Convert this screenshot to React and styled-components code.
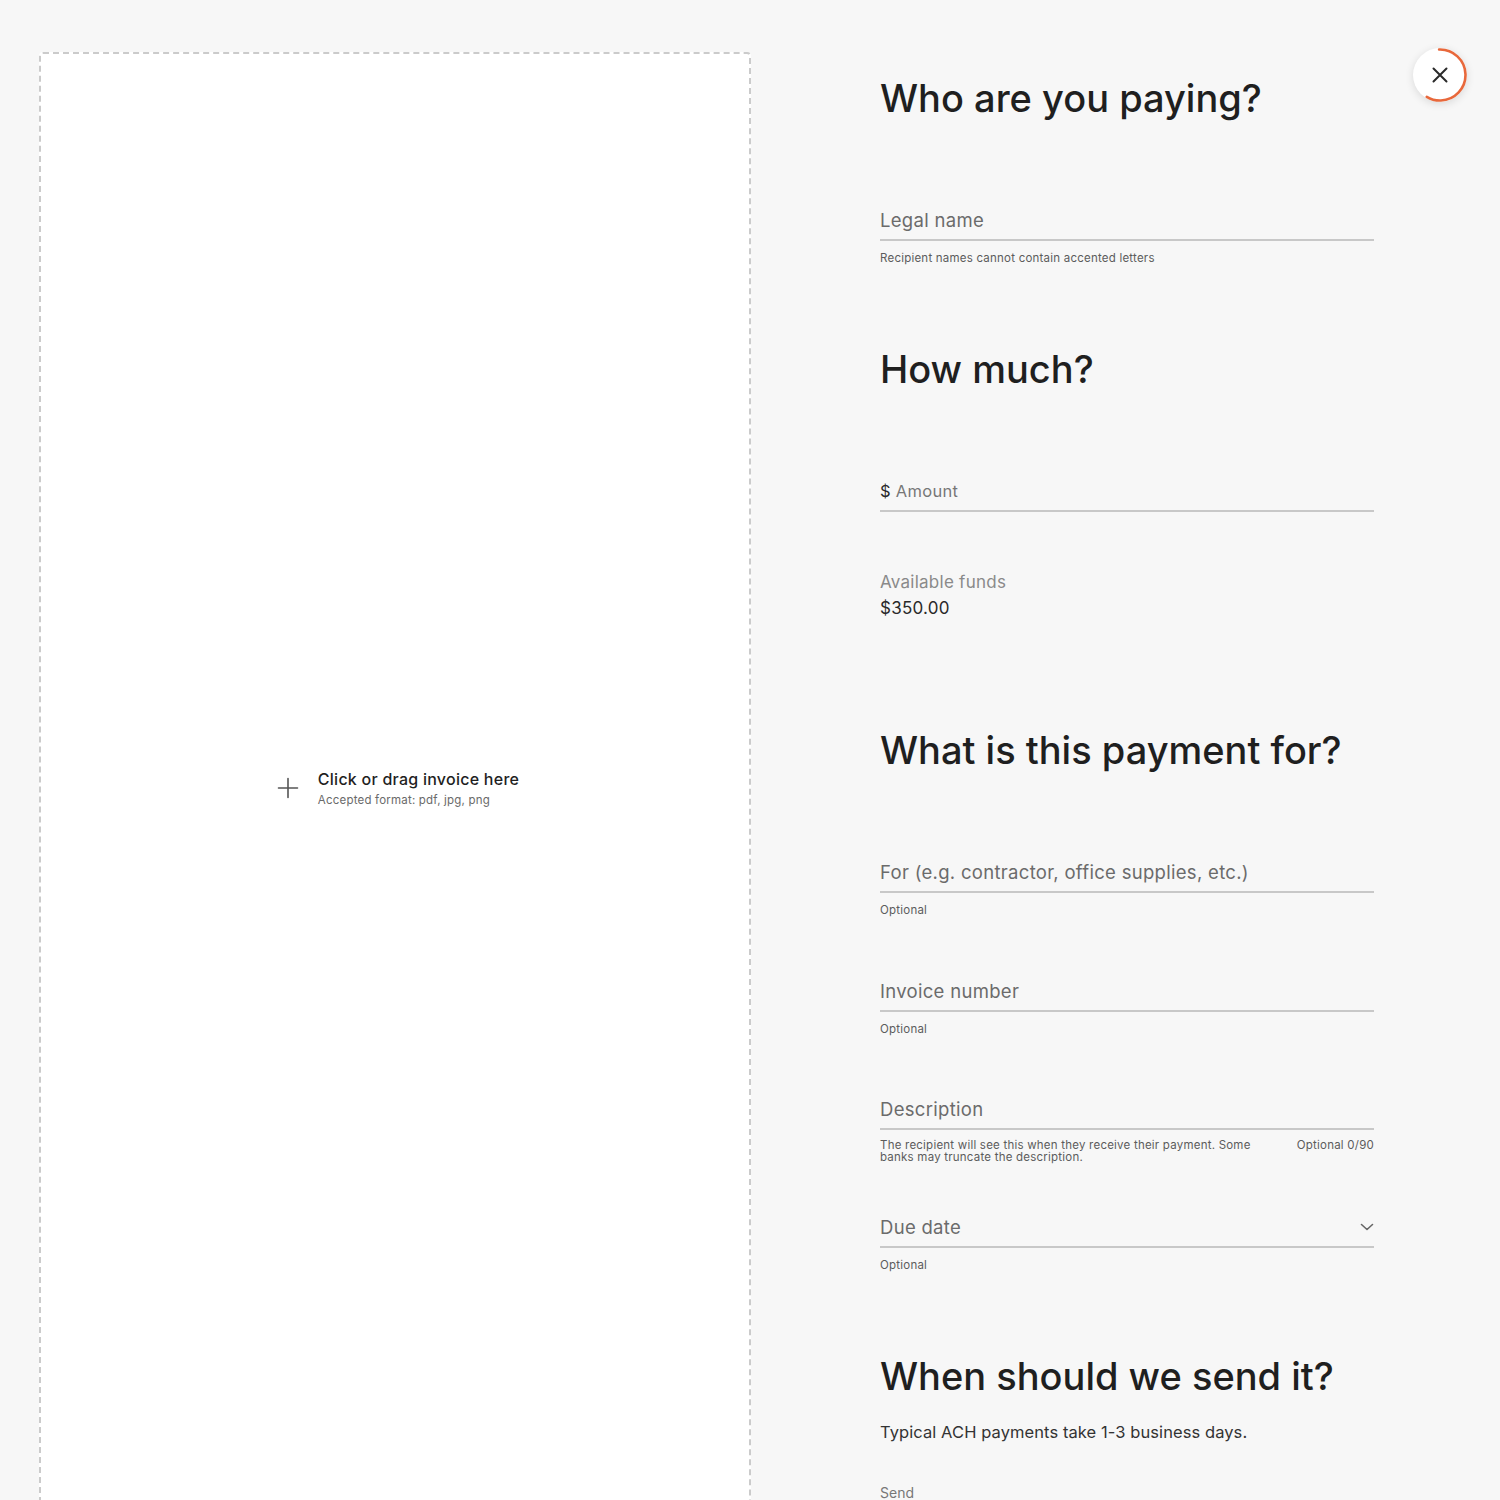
import React from "react";
import styled, { createGlobalStyle } from "styled-components";

const Global = createGlobalStyle`
  html, body { margin: 0; padding: 0; background: #f7f7f7; }
  body { font-family: Inter, "Noto Sans", "Liberation Sans", sans-serif; color: #1f1f1f; }
  * { box-sizing: border-box; }
`;

const Page = styled.div`
  position: relative;
  display: grid;
  grid-template-columns: 712px 494px;
  column-gap: 129px;
  padding: 52px 0 0 39px;
  min-height: 1500px;
`;

const DropZone = styled.div`
  height: 1472px;
  background: #ffffff;
  border: 2px dashed #cbcbcb;
  border-radius: 4px;
  display: flex;
  align-items: center;
  justify-content: center;
  padding-left: 6px;
`;

const DropInner = styled.div`
  display: flex;
  align-items: center;
  gap: 19px;
`;

const DropText = styled.div`
  display: flex;
  flex-direction: column;
  gap: 4px;
`;

const DropTitle = styled.div`
  font-size: 16px;
  line-height: 20px;
  font-weight: 500;
  letter-spacing: 0.25px;
  color: #1f1f1f;
`;

const DropSub = styled.div`
  font-size: 11.5px;
  line-height: 14px;
  letter-spacing: 0.2px;
  color: #6a6a6a;
`;

const Form = styled.div`
  display: flex;
  flex-direction: column;
  padding-top: 22px;
`;

const Heading = styled.h2`
  margin: ${p => p.$mt || 0}px 0 0;
  font-size: 38px;
  line-height: 48px;
  font-weight: 500;
  letter-spacing: 0px;
  color: #1f1f1f;
`;

const Field = styled.div`
  margin-top: ${p => p.$mt || 0}px;
  display: flex;
  align-items: center;
  justify-content: space-between;
  padding-bottom: 7px;
  border-bottom: 2px solid #c8c8c8;
`;

const Label = styled.div`
  font-size: ${p => p.$size || 18.5}px;
  line-height: 24px;
  letter-spacing: 0.3px;
  color: #6b6b6b;
`;

const Dollar = styled.span`
  color: #2a2a2a;
`;

const AmountText = styled.span`
  color: #777;
`;

const Helper = styled.div`
  margin-top: 9px;
  display: flex;
  justify-content: space-between;
  gap: 40px;
  font-size: 11.5px;
  letter-spacing: 0.22px;
  line-height: ${p => p.$lh || 16}px;
  color: #5c5c5c;
`;

const HelperRight = styled.span`
  white-space: nowrap;
  line-height: 12px;
`;

const FundsLabel = styled.div`
  margin-top: 57px;
  font-size: 17px;
  line-height: 26px;
  letter-spacing: 0.25px;
  color: #8a8a8a;
`;

const FundsValue = styled.div`
  font-size: 17px;
  line-height: 26px;
  letter-spacing: 0.25px;
  color: #2a2a2a;
`;

const Body = styled.div`
  margin-top: 20px;
  font-size: 16.5px;
  line-height: 24px;
  letter-spacing: 0.08px;
  color: #333;
`;

const Small = styled.div`
  margin-top: 41px;
  font-size: 14px;
  line-height: 16px;
  color: #777;
`;

const CloseButton = styled.button`
  position: absolute;
  top: 48px;
  left: 1413px;
  width: 54px;
  height: 54px;
  border-radius: 50%;
  border: none;
  padding: 0;
  background: #ffffff;
  box-shadow: 0 2px 8px rgba(0, 0, 0, 0.12);
  display: flex;
  align-items: center;
  justify-content: center;
  cursor: pointer;
`;

const Ring = styled.svg`
  position: absolute;
  inset: 0;
`;

const PlusIcon = () => (
  <svg width="22" height="22" viewBox="0 0 22 22" fill="none">
    <path d="M11 1.5v19M1.5 11h19" stroke="#555" strokeWidth="1.6" strokeLinecap="round" />
  </svg>
);

const Chevron = () => (
  <svg width="14" height="10" viewBox="0 0 14 10" fill="none">
    <path d="M1.5 2.5L7 7.5l5.5-5" stroke="#666" strokeWidth="1.6" strokeLinecap="round" strokeLinejoin="round" />
  </svg>
);

export default function App() {
  const r = 25.5;
  const c = 2 * Math.PI * r;
  const arc = c * (212 / 360);
  return (
    <>
      <Global />
      <Page>
        <DropZone>
          <DropInner>
            <PlusIcon />
            <DropText>
              <DropTitle>Click or drag invoice here</DropTitle>
              <DropSub>Accepted format: pdf, jpg, png</DropSub>
            </DropText>
          </DropInner>
        </DropZone>

        <Form>
          <Heading>Who are you paying?</Heading>
          <Field $mt={86}>
            <Label>Legal name</Label>
          </Field>
          <Helper>Recipient names cannot contain accented letters</Helper>

          <Heading $mt={79}>How much?</Heading>
          <Field $mt={86}>
            <Label $size={16.5}>
              <Dollar>$</Dollar> <AmountText>Amount</AmountText>
            </Label>
          </Field>
          <FundsLabel>Available funds</FundsLabel>
          <FundsValue>$350.00</FundsValue>

          <Heading $mt={105}>What is this payment for?</Heading>
          <Field $mt={86}>
            <Label>For (e.g. contractor, office supplies, etc.)</Label>
          </Field>
          <Helper>Optional</Helper>

          <Field $mt={61}>
            <Label>Invoice number</Label>
          </Field>
          <Helper>Optional</Helper>

          <Field $mt={60}>
            <Label>Description</Label>
          </Field>
          <Helper $lh={12}>
            <span>
              The recipient will see this when they receive their payment. Some
              <br />
              banks may truncate the description.
            </span>
            <HelperRight>Optional 0/90</HelperRight>
          </Helper>

          <Field $mt={52}>
            <Label>Due date</Label>
            <Chevron />
          </Field>
          <Helper>Optional</Helper>

          <Heading $mt={79}>When should we send it?</Heading>
          <Body>Typical ACH payments take 1-3 business days.</Body>
          <Small>Send</Small>
        </Form>

        <CloseButton aria-label="Close">
          <Ring width="54" height="54" viewBox="0 0 54 54">
            <circle
              cx="27"
              cy="27"
              r={r}
              fill="none"
              stroke="#e8683b"
              strokeWidth="2.6"
              strokeDasharray={`${arc} ${c}`}
              transform="rotate(-92 27 27)"
              strokeLinecap="round"
            />
          </Ring>
          <svg width="18" height="18" viewBox="0 0 18 18" fill="none">
            <path d="M2.5 2.5l13 13M15.5 2.5l-13 13" stroke="#2a2a2a" strokeWidth="2" strokeLinecap="round" />
          </svg>
        </CloseButton>
      </Page>
    </>
  );
}
